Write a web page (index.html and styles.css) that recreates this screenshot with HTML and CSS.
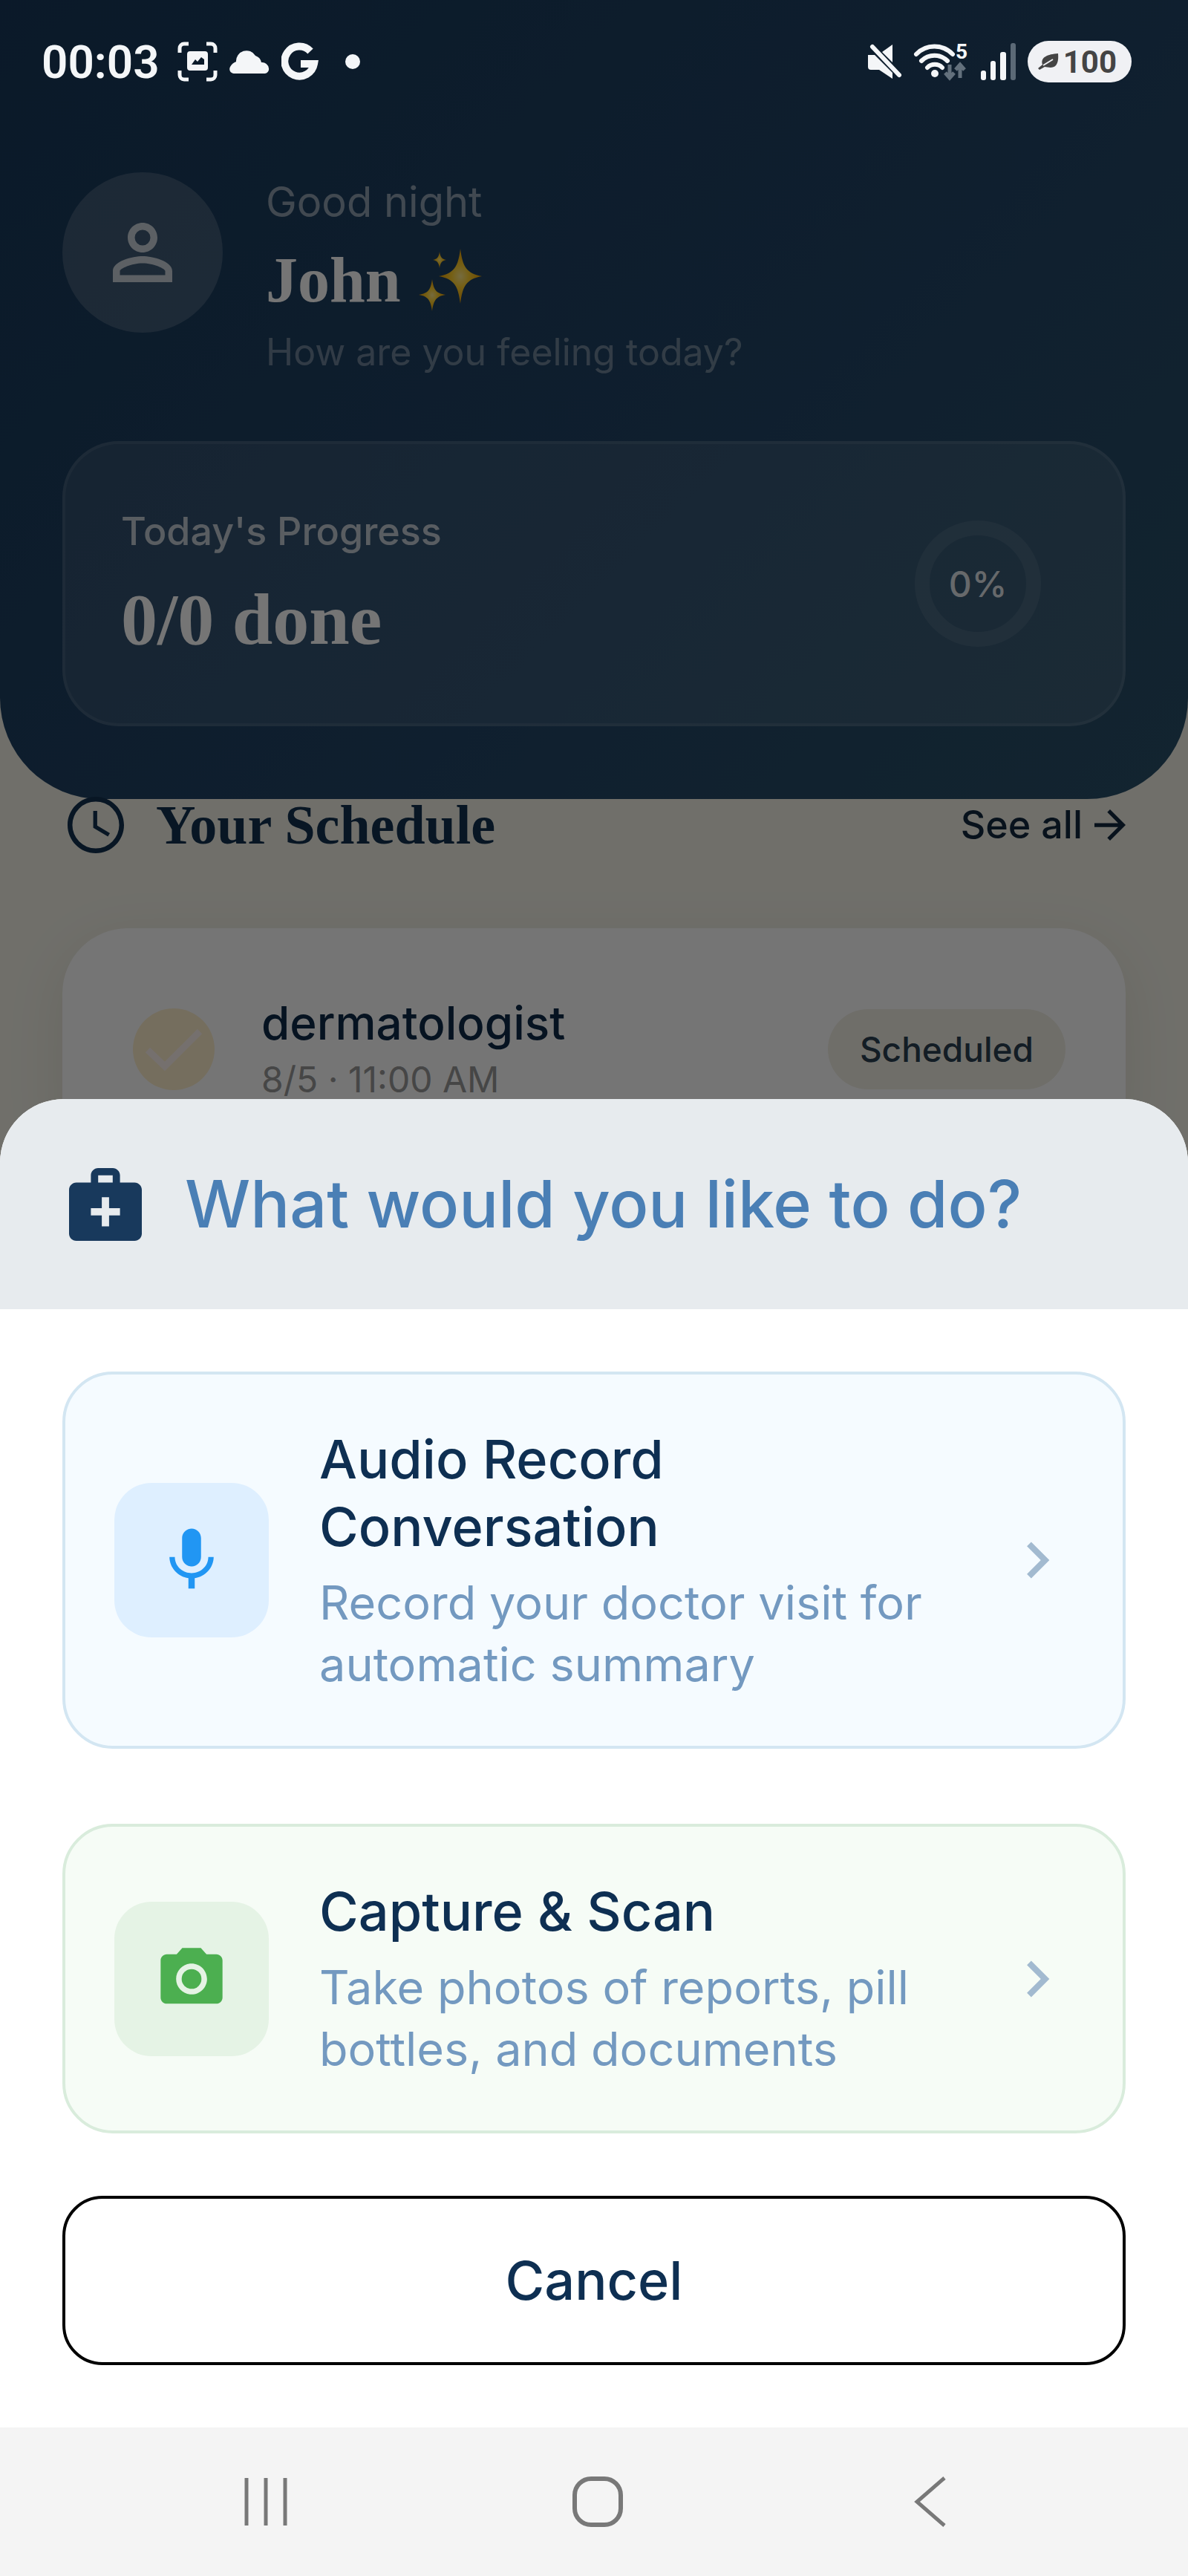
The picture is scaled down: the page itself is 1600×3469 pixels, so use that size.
FILE: index.html
```html
<!DOCTYPE html>
<html lang="en">
<head>
    <meta charset="UTF-8">
    <meta name="viewport" content="width=device-width, initial-scale=1.0">
    <title>What would you like to do?</title>
    <link rel="stylesheet" href="styles.css">
</head>
<body>
    <div class="screen">
        <main class="home">
            <header class="hero">
                <div class="status-bar">
                    <span class="time">00:03</span>
                    <svg class="scan-icon" width="54" height="54" viewBox="0 0 54 54">
                        <path d="M3 15V9a6 6 0 0 1 6-6h6M39 3h6a6 6 0 0 1 6 6v6M51 39v6a6 6 0 0 1-6 6h-6M15 51H9a6 6 0 0 1-6-6v-6" fill="none" stroke="#f4f6f8" stroke-width="5"/>
                        <path fill="#f4f6f8" fill-rule="evenodd" d="M17 13h20a4 4 0 0 1 4 4v18a4 4 0 0 1-4 4H17a4 4 0 0 1-4-4V17a4 4 0 0 1 4-4zm2 18h17v-7l-4-3-5 6-3-3z"/>
                    </svg>
                    <svg width="54" height="32" viewBox="0 0 54 32">
                        <path fill="#f4f6f8" d="M6 32a6 6 0 0 1-5-9 14 14 0 0 1 8-7 14 14 0 0 1 26-8 12 12 0 0 1 8 9 9 9 0 0 1 10 8 6 6 0 0 1-5 7z"/>
                    </svg>
                    <svg width="50" height="52" viewBox="0 0 50 52">
                        <path fill="none" stroke="#f4f6f8" stroke-width="10" d="M39 12A20 20 0 1 0 44 29H26"/>
                    </svg>
                    <span class="dot"></span>
                    <div class="status-right">
                        <svg width="50" height="50" viewBox="0 0 50 50">
                            <path fill="#f4f6f8" d="M36 2v24L22 12zM3 16h9l24 24v8L18 36H7a4 4 0 0 1-4-4z"/>
                            <path stroke="#f4f6f8" stroke-width="6" stroke-linecap="round" d="M9 5l36 38"/>
                        </svg>
                        <svg width="76" height="60" viewBox="0 -3 76 60">
                            <g fill="none" stroke="#f4f6f8" stroke-width="6" stroke-linecap="round">
                                <path d="M4 17a34 34 0 0 1 49 0M11 26a25 25 0 0 1 35 0M19 35a14 14 0 0 1 20 0"/>
                            </g>
                            <circle cx="29" cy="43" r="5" fill="#f4f6f8"/>
                            <path d="M49 31v17m-6-6 6 7 6-7M63 49V32m-6 6 6-7 6 7" fill="none" stroke="#63707c" stroke-width="5"/>
                            <text class="wifi-band" x="57" y="23">5</text>
                        </svg>
                        <svg width="50" height="52" viewBox="0 0 50 52">
                            <g fill="#f4f6f8">
                                <rect x="1" y="38" width="7" height="13" rx="3"/>
                                <rect x="14" y="25" width="7" height="26" rx="3"/>
                                <rect x="27" y="13" width="8" height="38" rx="3"/>
                            </g>
                            <rect x="41" y="1" width="7" height="50" rx="3" fill="#5b6976"/>
                        </svg>
                        <span class="battery">
                            <svg width="28" height="22" viewBox="0 0 28 22">
                                <path fill="#444" d="M27 0c1 10-1 19-10 19-3 0-6-1-8-1l-7 4-2-2 6-5C3 5 13 1 27 0z"/>
                                <path stroke="#f0f1f4" stroke-width="2" fill="none" d="M7 16 20 8"/>
                            </svg>
                            100
                        </span>
                    </div>
                </div>

                <div class="user">
                    <div class="avatar">
                        <svg width="120" height="120" viewBox="0 0 24 24" fill="#fff" fill-opacity=".72">
                            <path d="M12 5.9a2.1 2.1 0 1 1 0 4.2 2.1 2.1 0 0 1 0-4.2m0 9c2.97 0 6.1 1.46 6.1 2.1v1.1H5.9V17c0-.64 3.13-2.1 6.1-2.1M12 4C9.79 4 8 5.79 8 8s1.79 4 4 4 4-1.79 4-4-1.79-4-4-4zm0 9c-2.67 0-8 1.34-8 4v3h16v-3c0-2.66-5.33-4-8-4z"/>
                        </svg>
                    </div>
                    <div>
                        <p class="greeting">Good night</p>
                        <h1 class="name">
                            John
                            <svg width="88" height="88" viewBox="0 0 88 88" fill="url(#sparkle)">
                                <defs>
                                    <radialGradient id="sparkle">
                                        <stop offset="0" stop-color="#ffe98a"/>
                                        <stop offset=".4" stop-color="#ffd02f"/>
                                        <stop offset="1" stop-color="#ee9f00"/>
                                    </radialGradient>
                                </defs>
                                <path d="M58 2c3 24 8 33 29 37-21 4-26 13-29 37-3-24-8-33-29-37 21-4 26-13 29-37z"/>
                                <path d="M20 43c2 14 5 19 18 21-13 2-16 8-18 22-2-14-5-20-18-22 13-2 16-7 18-21z"/>
                                <path d="M30 6c1 7 3 10 9 11-6 1-8 4-9 11-1-7-3-10-9-11 6-1 8-4 9-11z"/>
                            </svg>
                        </h1>
                        <p class="feeling">How are you feeling today?</p>
                    </div>
                </div>

                <div class="progress">
                    <div>
                        <p class="progress-label">Today's Progress</p>
                        <p class="progress-value">0/0 done</p>
                    </div>
                    <div class="ring">0%</div>
                </div>
            </header>

            <section class="schedule">
                <div class="schedule-head">
                    <svg width="76" height="76" viewBox="2 2 20 20" fill="#12304f">
                        <path d="M11.99 2C6.47 2 2 6.48 2 12s4.47 10 9.99 10C17.52 22 22 17.52 22 12S17.52 2 11.99 2zM12 20.3a8.3 8.3 0 1 1 0-16.6 8.3 8.3 0 0 1 0 16.6zM12.5 7h-1.4v6l5.2 3.1.7-1.2-4.5-2.7z"/>
                    </svg>
                    <h2>Your Schedule</h2>
                    <a class="see-all" href="#">
                        See all
                        <svg width="42" height="42" viewBox="4 4 16 16" fill="#12283e">
                            <path d="M12 4l-1.41 1.41L16.17 11H4v2h12.17l-5.58 5.59L12 20l8-8z"/>
                        </svg>
                    </a>
                </div>
                <div class="appointment">
                    <svg width="112" height="112" viewBox="0 0 112 112">
                        <circle cx="56" cy="56" r="55" fill="#ffefcd"/>
                        <path d="M21 57l23 22 47-47" fill="none" stroke="#fff5f0" stroke-width="9"/>
                    </svg>
                    <div class="appointment-text">
                        <p class="appointment-title">dermatologist</p>
                        <p class="appointment-time">8/5 · 11:00 AM</p>
                    </div>
                    <span class="badge">Scheduled</span>
                </div>
            </section>
        </main>

        <div class="backdrop"></div>

        <div class="bottom">
            <section class="sheet">
                <div class="sheet-head">
                    <svg width="98" height="98" viewBox="2 2 20 20" fill="#18395c">
                        <path d="M20 6h-4V4c0-1.100-.9-2-2-2h-4c-1.100 0-2 .9-2 2v2H4c-1.100 0-2 .9-2 2v12c0 1.100.9 2 2 2h16c1.100 0 2-.9 2-2V8c0-1.100-.9-2-2-2zM10 4h4v2h-4V4zm6 11h-3v3h-2v-3H8v-2h3v-3h2v3h3v2z"/>
                    </svg>
                    <h2>What would you like to do?</h2>
                </div>
                <div class="sheet-body">
                    <div class="options">
                        <button class="option audio" type="button">
                            <span class="option-icon">
                                <svg width="102" height="102" viewBox="0 0 24 24" fill="#2196f3">
                                    <path d="M12 14c1.660 0 3-1.340 3-3V5c0-1.660-1.340-3-3-3S9 3.340 9 5v6c0 1.660 1.340 3 3 3zm5.300-3c0 3-2.540 5.100-5.300 5.100S6.700 14 6.700 11H5c0 3.410 2.720 6.230 6 6.720V21h2v-3.280c3.280-.48 6-3.300 6-6.720h-1.700z"/>
                                </svg>
                            </span>
                            <span class="option-text">
                                <span class="option-title">Audio Record<br>Conversation</span>
                                <span class="option-desc">Record your doctor visit for<br>automatic summary</span>
                            </span>
                            <svg width="98" height="98" viewBox="0 0 24 24" fill="#a2bad0">
                                <path d="M10 6L8.590 7.410 13.170 12l-4.580 4.590L10 18l6-6z"/>
                            </svg>
                        </button>
                        <button class="option scan" type="button">
                            <span class="option-icon">
                                <svg width="100" height="100" viewBox="0 0 24 24" fill="#4caf50">
                                    <circle cx="12" cy="12" r="3.200"/>
                                    <path d="M9 2L7.170 4H4c-1.100 0-2 .9-2 2v12c0 1.100.9 2 2 2h16c1.100 0 2-.9 2-2V6c0-1.100-.9-2-2-2h-3.170L15 2H9zm3 15c-2.760 0-5-2.240-5-5s2.240-5 5-5 5 2.240 5 5-2.240 5-5 5z"/>
                                </svg>
                            </span>
                            <span class="option-text">
                                <span class="option-title">Capture &amp; Scan</span>
                                <span class="option-desc">Take photos of reports, pill<br>bottles, and documents</span>
                            </span>
                            <svg width="98" height="98" viewBox="0 0 24 24" fill="#a2bad0">
                                <path d="M10 6L8.590 7.410 13.170 12l-4.580 4.590L10 18l6-6z"/>
                            </svg>
                        </button>
                    </div>
                    <button class="cancel" type="button">Cancel</button>
                </div>
            </section>
            <nav class="nav-bar">
                <button type="button" aria-label="Recent apps">
                    <svg width="68" height="68" viewBox="0 0 68 68" stroke="#787878" stroke-width="5">
                        <path d="M6 2v64M32 2v64M58 2v64"/>
                    </svg>
                </button>
                <button type="button" aria-label="Home">
                    <svg width="68" height="68" viewBox="0 0 68 68" fill="none" stroke="#787878" stroke-width="6">
                        <rect x="3" y="3" width="62" height="62" rx="22"/>
                    </svg>
                </button>
                <button type="button" aria-label="Back">
                    <svg width="68" height="68" viewBox="0 0 68 68" fill="none" stroke="#787878" stroke-width="5">
                        <path d="M56 2L19 34l37 32"/>
                    </svg>
                </button>
            </nav>
        </div>
    </div>
</body>
</html>
```

FILE: styles.css
```css
* {
    box-sizing: border-box;
}
body {
    margin: 0;
    font-family: Inter, "Liberation Sans", sans-serif;
    color: #0e2a48;
}
h1, h2, p {
    margin: 0;
}
svg {
    display: block;
    flex-shrink: 0;
}
button {
    font-family: inherit;
    cursor: pointer;
}
.screen {
    position: relative;
    min-height: 100vh;
    overflow: hidden;
    background-color: #f3f2e8;
}

/* header */
.hero {
    padding: 0 84px 98px;
    background: linear-gradient(135deg, #18385a, #224566 60%, #2a5069);
    border-radius: 0 0 136px 136px;
}
.status-bar {
    position: relative;
    z-index: 2;
    display: flex;
    align-items: center;
    height: 166px;
    margin: 0 -8px 66px -28px;
    gap: 16px;
    color: #f4f6f8;
}
.time {
    font-family: Roboto, sans-serif;
    font-size: 62px;
    font-weight: 600;
}
.scan-icon {
    margin-left: 8px;
}
.dot {
    width: 20px;
    height: 20px;
    margin-left: 20px;
    border-radius: 50%;
    background-color: #f4f6f8;
}
.status-right {
    display: flex;
    align-items: center;
    gap: 14px;
    margin-left: auto;
}
.wifi-band {
    font: 700 28px Roboto, sans-serif;
    fill: #f4f6f8;
}
.battery {
    display: flex;
    align-items: center;
    gap: 6px;
    height: 56px;
    padding: 0 20px 0 14px;
    border-radius: 28px;
    background-color: #f0f1f4;
    color: #444;
    font: 700 42px Roboto, sans-serif;
}
.user {
    display: flex;
    gap: 58px;
    margin-bottom: 88px;
}
.avatar {
    display: flex;
    align-items: center;
    justify-content: center;
    width: 216px;
    height: 216px;
    border-radius: 50%;
    background-color: rgba(255, 255, 255, 0.16);
}
.greeting {
    font-size: 56px;
    line-height: 80px;
    color: rgba(255, 255, 255, 0.5);
}
.name {
    display: flex;
    align-items: center;
    gap: 22px;
    font: 700 86px/130px "Liberation Serif", serif;
    color: #fff;
}
.feeling {
    font-size: 50px;
    line-height: 64px;
    color: rgba(255, 255, 255, 0.35);
}
.progress {
    display: flex;
    align-items: center;
    justify-content: space-between;
    padding: 78px 110px 78px 75px;
    border: 4px solid rgba(255, 255, 255, 0.08);
    border-radius: 76px;
    background-color: rgba(255, 255, 255, 0.09);
}
.progress-label {
    margin-bottom: 16px;
    font-size: 52px;
    font-weight: 500;
    line-height: 80px;
    color: rgba(255, 255, 255, 0.7);
}
.progress-value {
    font: 700 98px/124px "Liberation Serif", serif;
    color: #fff;
}
.ring {
    display: flex;
    align-items: center;
    justify-content: center;
    width: 170px;
    height: 170px;
    border: 20px solid rgba(255, 255, 255, 0.08);
    border-radius: 50%;
    font-size: 48px;
    font-weight: 500;
    color: rgba(255, 255, 255, 0.85);
}

/* schedule */
.schedule {
    padding: 0 84px;
}
.schedule-head {
    display: flex;
    align-items: center;
    padding-left: 7px;
    margin: -3px 0 101px;
}
.schedule-head h2 {
    margin-left: 43px;
    font: 700 74px/72px "Liberation Serif", serif;
    color: #12304f;
}
.see-all {
    display: flex;
    align-items: center;
    gap: 16px;
    margin-left: auto;
    font-size: 52px;
    font-weight: 500;
    line-height: 72px;
    color: #12283e;
    text-decoration: none;
}
.appointment {
    display: flex;
    align-items: center;
    padding: 87px 81px 87px 94px;
    border-radius: 88px;
    background-color: #fff;
    box-shadow: 0 20px 80px rgba(90, 80, 40, 0.1);
}
.appointment-text {
    flex: 1;
    margin-left: 62px;
}
.appointment-title {
    font-size: 62px;
    font-weight: 500;
    line-height: 82px;
}
.appointment-time {
    font-size: 48px;
    line-height: 70px;
    color: #989898;
}
.badge {
    padding: 0 43px;
    border-radius: 54px;
    background-color: #f2efe5;
    font-size: 46px;
    font-weight: 500;
    line-height: 108px;
    color: #2a3f52;
}
.backdrop {
    position: absolute;
    inset: 0;
    background-color: rgba(0, 0, 0, 0.54);
}

/* bottom sheet */
.bottom {
    position: absolute;
    left: 0;
    right: 0;
    bottom: 0;
    z-index: 3;
}
.sheet {
    overflow: hidden;
    border-radius: 86px 86px 0 0;
    background-color: #fff;
}
.sheet-head {
    display: flex;
    align-items: center;
    gap: 58px;
    padding: 84px 93px;
    background-color: #e7ebee;
}
.sheet-head h2 {
    font-size: 88px;
    font-weight: 500;
    line-height: 115px;
    color: #4a7fb5;
}
.sheet-body {
    padding: 84px;
}
.options {
    display: grid;
    gap: 101px;
    margin-bottom: 84px;
}
.option {
    display: flex;
    align-items: center;
    gap: 68px;
    width: 100%;
    padding: 68px 66px;
    border: 4px solid;
    border-radius: 68px;
    text-align: left;
}
.audio {
    border-color: #d3e6f2;
    background-color: #f5fbff;
}
.scan {
    border-color: #d9ecdc;
    background-color: #f6fcf6;
}
.option-icon {
    display: flex;
    align-items: center;
    justify-content: center;
    width: 208px;
    height: 208px;
    border-radius: 50px;
}
.audio .option-icon {
    background-color: #deefff;
}
.scan .option-icon {
    background-color: #e5f3e5;
}
.option-text {
    flex: 1;
}
.option-title,
.option-desc {
    display: block;
}
.option-title {
    margin-bottom: 16px;
    font-size: 72px;
    font-weight: 500;
    line-height: 91px;
    color: #0e2f52;
}
.option-desc {
    font-size: 63px;
    line-height: 83px;
    color: #7399c0;
}
.cancel {
    display: block;
    width: 100%;
    padding: 66px;
    border: 4px solid #000;
    border-radius: 54px;
    background-color: #fff;
    font-size: 72px;
    font-weight: 500;
    line-height: 88px;
    color: #0e2f52;
}
.nav-bar {
    display: grid;
    grid-template-columns: repeat(3, 28%);
    justify-content: center;
    justify-items: center;
    align-items: center;
    height: 200px;
    padding-left: 10px;
    background-color: #f4f4f4;
}
.nav-bar button {
    padding: 0;
    border: 0;
    background: none;
}
```
